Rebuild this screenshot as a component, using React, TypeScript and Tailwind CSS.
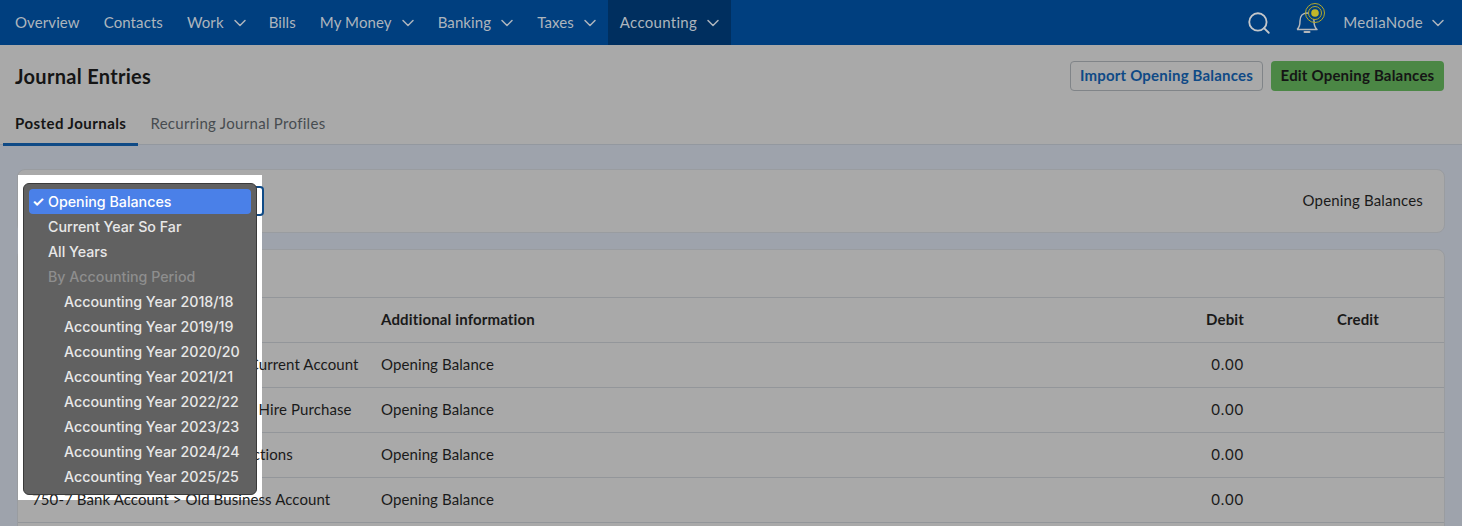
import React from "react";
import { ChevronDown, Search } from "lucide-react";

const navItems = [
  { label: "Overview" },
  { label: "Contacts" },
  { label: "Work", caret: "-mr-[5px]" },
  { label: "Bills" },
  { label: "My Money", caret: "-mr-[4px]" },
  { label: "Banking", caret: "-mr-[4px]" },
  { label: "Taxes", caret: "-mr-[4px]" },
  { label: "Accounting", caret: "-mr-[5px]", active: true },
];

const rows = [
  "750-5 Bank Account > Premium Current Account",
  "763-1 Bank Loans > Liabilities for Hire Purchase",
  "764-2 Bank > Unallocated Transactions",
  "750-7 Bank Account > Old Business Account",
];

const years = ["2018/18", "2019/19", "2020/20", "2021/21", "2022/22", "2023/23", "2024/24", "2025/25"];

const BellIcon = () => (
  <svg width="34" height="34" viewBox="0 0 34 34" fill="none" className="-mt-[5px] shrink-0">
    <path
      d="M2 26.500c2.500-2 3-4.500 3-8.500 0-4.500 2.500-8 7-8M12 10c4.500 0 7 3.500 7 8 0 4 .5 6.500 3 8.500H2"
      stroke="#b4b7ba"
      strokeWidth="1.500"
      strokeLinejoin="round"
    />
    <path d="M9.500 29h5" stroke="#b4b7ba" strokeWidth="2" strokeLinecap="round" />
    <circle cx="20" cy="10" r="9.500" stroke="#b3a92c" strokeWidth="1" />
    <circle cx="20" cy="10" r="6.500" stroke="#b3a92c" strokeWidth="1" fill="#003f7f" />
    <circle cx="20" cy="10" r="3.800" fill="#c2b72a" />
  </svg>
);

const App = () => {
  return (
    <div className="relative h-screen overflow-hidden bg-[#9ea3ac] text-[15px] tracking-[0.1px] text-[#1a1a1a] font-['Lato',sans-serif]">
      {/* top nav */}
      <div className="flex h-[45px] items-stretch justify-between bg-[#003f7f] pl-[3px] text-[#adb5bd]">
        <div className="flex items-stretch">
          {navItems.map((item) => (
            <div
              key={item.label}
              className={
                item.active
                  ? "flex w-[123px] items-center gap-[6px] bg-[#002f5f] px-3 tracking-[0.3px]"
                  : "flex items-center gap-[6px] px-3"
              }
            >
              {item.label}
              {item.caret && <ChevronDown size={20} strokeWidth={1.800} className={item.caret} />}
            </div>
          ))}
        </div>
        <div className="flex items-center pr-[14px]">
          <Search size={26} strokeWidth={1.700} className="mr-[23px] text-[#c4c7ca]" />
          <BellIcon />
          <span className="ml-[14px] mr-[5px] tracking-[0.3px]">MediaNode</span>
          <ChevronDown size={20} strokeWidth={1.800} />
        </div>
      </div>

      {/* page header */}
      <div className="h-[100px] border-b border-[#93989f] bg-[#a9a9a9]">
        <div className="flex items-center justify-between pl-[15px] pr-[18px] pt-[15px]">
          <h1 className="pt-[1px] text-[20px] font-bold tracking-[0.3px] text-[#151515]">Journal Entries</h1>
          <div className="flex gap-2">
            <button className="h-[30px] w-[193px] rounded border border-[#808488] pb-[1px] font-bold tracking-[0.2px] text-[#0f4a86]">
              Import Opening Balances
            </button>
            <button className="h-[30px] w-[173px] rounded bg-[#4b8745] pb-[1px] font-bold tracking-[0.2px] text-[#151515]">
              Edit Opening Balances
            </button>
          </div>
        </div>
        <div className="mt-[16px] flex pl-[3px]">
          <div className="h-[39px] border-b-[3px] border-[#0f4a86] px-3 pt-[5px] font-bold tracking-[0.45px] text-[#151515]">
            Posted Journals
          </div>
          <div className="px-3 pt-[5px] tracking-[0.3px] text-[#474c50]">Recurring Journal Profiles</div>
        </div>
      </div>

      {/* filter bar */}
      <div className="mx-[17px] mt-6 flex h-[64px] items-center justify-end rounded-lg border border-[#999ca0] bg-[#a9a9a9] pb-[1px] pr-[21px] tracking-[0.15px]">
        Opening Balances
      </div>

      {/* table */}
      <div className="mx-[17px] mt-4 rounded-t-lg border border-[#999ca0] bg-[#a9a9a9]">
        <div className="h-[47px]" />
        <div className="grid h-[45px] grid-cols-[347px_1fr_135px_135px_49px] items-center border-t border-[#93969a] pb-[1px] font-bold tracking-[0.15px]">
          <span />
          <span className="relative z-20 px-4">Additional information</span>
          <span className="relative z-20 px-4 text-right">Debit</span>
          <span className="relative z-20 px-4 text-right">Credit</span>
          <span />
        </div>
        {rows.map((name) => (
          <div
            key={name}
            className="grid h-[45px] grid-cols-[347px_1fr_135px_135px_49px] items-center border-t border-[#93969a] pb-[1px]"
          >
            <span className="relative z-20 -ml-[2px] whitespace-nowrap px-4">{name}</span>
            <span className="relative z-20 px-4">Opening Balance</span>
            <span className="relative z-20 px-4 text-right tracking-[0.8px]">0.00</span>
            <span />
            <span />
          </div>
        ))}
        <div className="h-[45px] border-t border-[#93969a]" />
      </div>

      {/* select behind the menu, white backing and native menu */}
      <div className="absolute left-[240px] top-[186px] z-20 h-[30px] w-[24px] rounded-r border-2 border-l-0 border-[#0f4a86]" />
      <div className="absolute left-[18px] top-[175px] z-10 h-[325px] w-[244px] bg-white" />
      <div className="absolute left-[23px] top-[183px] z-30 h-[312px] w-[234px] rounded-md border border-[#3a3a3a] bg-[#616161] px-[5px] pt-[5px] font-['Inter',sans-serif] text-[14.250px] font-medium tracking-normal text-[#e8e8e8]">
        <div className="relative flex h-[25px] items-center rounded bg-[#4a80e8] pl-[19px] text-white">
          <span className="absolute left-[3px] text-[14px] font-bold">✓</span>
          Opening Balances
        </div>
        <div className="flex h-[25px] items-center pl-[19px]">Current Year So Far</div>
        <div className="flex h-[25px] items-center pl-[19px]">All Years</div>
        <div className="flex h-[25px] items-center pl-[19px] text-[#8e8e8e]">By Accounting Period</div>
        {years.map((year) => (
          <div key={year} className="flex h-[25px] items-center pl-[35px]">
            Accounting Year {year}
          </div>
        ))}
      </div>
    </div>
  );
};

export default App;
